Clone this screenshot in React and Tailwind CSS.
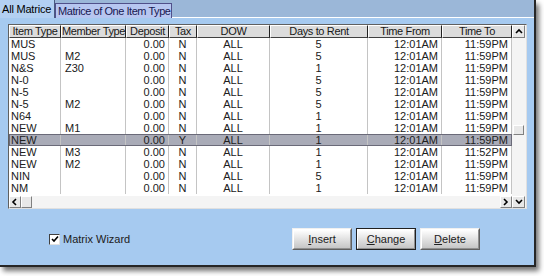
import React from "react";

const rows = [
  ["MUS", "", "0.00", "N", "ALL", "5", "12:01AM", "11:59PM"],
  ["MUS", "M2", "0.00", "N", "ALL", "5", "12:01AM", "11:59PM"],
  ["N&S", "Z30", "0.00", "N", "ALL", "1", "12:01AM", "11:59PM"],
  ["N-0", "", "0.00", "N", "ALL", "5", "12:01AM", "11:59PM"],
  ["N-5", "", "0.00", "N", "ALL", "5", "12:01AM", "11:59PM"],
  ["N-5", "M2", "0.00", "N", "ALL", "5", "12:01AM", "11:59PM"],
  ["N64", "", "0.00", "N", "ALL", "1", "12:01AM", "11:59PM"],
  ["NEW", "M1", "0.00", "N", "ALL", "1", "12:01AM", "11:59PM"],
  ["NEW", "", "0.00", "Y", "ALL", "1", "12:01AM", "11:59PM"],
  ["NEW", "M3", "0.00", "N", "ALL", "1", "12:01AM", "11:52PM"],
  ["NEW", "M2", "0.00", "N", "ALL", "1", "12:01AM", "11:59PM"],
  ["NIN", "", "0.00", "N", "ALL", "5", "12:01AM", "11:59PM"],
  ["NM", "", "0.00", "N", "ALL", "1", "12:01AM", "11:59PM"],
];

const cols = [
  { label: "Item Type", w: "w-[52px]", align: "justify-start pl-[2px]" },
  { label: "Member Type", w: "w-[65px]", align: "justify-start pl-[4px]" },
  { label: "Deposit", w: "w-[43px]", align: "justify-end pr-[3px]" },
  { label: "Tax", w: "w-[28px]", align: "justify-center" },
  { label: "DOW", w: "w-[73px]", align: "justify-center" },
  { label: "Days to Rent", w: "w-[98px]", align: "justify-center" },
  { label: "Time From", w: "w-[74px]", align: "justify-end pr-[3px]" },
  { label: "Time To", w: "w-[70px]", align: "justify-end pr-[3px]" },
];

function ScrollBtn({ children, className = "" }) {
  return (
    <div
      className={
        "flex items-center justify-center bg-[#e8e8e8] border border-t-white border-l-white border-r-[#808080] border-b-[#808080] " +
        className
      }
    >
      {children}
    </div>
  );
}

function Arrow({ dir }) {
  const d = {
    up: "M1 5 L4 2 L7 5",
    down: "M1 2 L4 5 L7 2",
    left: "M5 1 L2 4 L5 7",
    right: "M2 1 L5 4 L2 7",
  }[dir];
  return (
    <svg width="8" height="8" viewBox="0 0 8 8">
      <path d={d} fill="none" stroke="#000" strokeWidth="1.6" />
    </svg>
  );
}

function Button({ children, focused }) {
  return (
    <div
      className={
        "w-[60px] h-[22px] " +
        (focused ? "border border-[#202020]" : "border border-[#606060] border-t-[#f0f0f0] border-l-[#f0f0f0]")
      }
    >
      <div className="w-full h-full flex items-center justify-center bg-gradient-to-b from-[#ffffff] to-[#c6c6c6] border border-t-white border-l-white border-r-[#909090] border-b-[#909090] text-[11px] text-[#202020]">
        {children}
      </div>
    </div>
  );
}

export default function App() {
  return (
    <div
      className="w-[544px] h-[276px] bg-white overflow-hidden"
      style={{ fontFamily: '"Liberation Sans", Arial, sans-serif' }}
    >
      <div className="w-[536px] h-[267px] flex flex-col border-r-2 border-b-2 border-[#262626] shadow-[3px_4px_5px_rgba(0,0,0,0.55)]">
        {/* tab strip */}
        <div className="h-[18px] flex bg-[#9bb7d8]">
          <div className="w-[55px] h-[18px] bg-[#b3d0f2] flex items-center pl-[2px] text-[11px] text-black whitespace-nowrap tracking-[-0.2px] border-r border-[#4a5a80]">
            All Matrice
          </div>
          <div className="mt-[3px] w-[117px] h-[15px] bg-[#b7c6f0] border border-[#50508a] border-b-0 flex items-center pl-[2px] text-[11px] text-[#181850] whitespace-nowrap tracking-[-0.45px] overflow-hidden">
            Matrice of One Item Type
          </div>
          <div className="flex-1 flex flex-col justify-end">
            <div className="h-[1px] bg-white" />
          </div>
        </div>
        {/* panel */}
        <div className="flex-1 bg-[#a6caf0] flex flex-col pl-[8px] pt-[6px]">
          {/* grid */}
          <div className="w-[519px] h-[185px] bg-white border border-t-[#606060] border-l-[#606060] border-r-[#e0e0e0] border-b-[#e0e0e0] flex">
            <div className="w-[503px] flex flex-col">
              <div className="flex h-[13px]">
                {cols.map((c) => (
                  <div
                    key={c.label}
                    className={
                      c.w +
                      " h-[13px] bg-[#dcdcdc] border border-t-white border-l-white border-r-[#202020] border-b-[#404040] flex items-center justify-center text-[11px] tracking-[-0.35px] text-[#181818] leading-none overflow-hidden whitespace-nowrap"
                    }
                  >
                    {c.label}
                  </div>
                ))}
              </div>
              {rows.map((r, i) => {
                const sel = i === 8;
                return (
                  <div
                    key={i}
                    className={"flex h-[12px] " + (sel ? "bg-[#a9abb7] outline outline-1 outline-[#6a6a78] -outline-offset-1" : "")}
                  >
                    {r.map((v, j) => (
                      <div
                        key={j}
                        className={
                          cols[j].w +
                          " " +
                          cols[j].align +
                          " h-[12px] flex items-center text-[11px] leading-none text-[#202020] whitespace-nowrap overflow-hidden border-r border-[#c4c4c4]"
                        }
                      >
                        {v}
                      </div>
                    ))}
                  </div>
                );
              })}
              <div className="flex-1" />
              <div className="h-[12px] flex bg-[#f4f4f4]">
                <ScrollBtn className="w-[12px] h-[12px]">
                  <Arrow dir="left" />
                </ScrollBtn>
                <ScrollBtn className="w-[11px] h-[12px]" />
                <div className="flex-1" />
                <ScrollBtn className="w-[12px] h-[12px]">
                  <Arrow dir="right" />
                </ScrollBtn>
              </div>
            </div>
            <div className="w-[14px] flex flex-col bg-[#f4f4f4]">
              <ScrollBtn className="w-[13px] h-[13px]">
                <Arrow dir="up" />
              </ScrollBtn>
              <div className="flex-1 pt-[87px] pl-[1px]">
                <ScrollBtn className="w-[11px] h-[10px]" />
              </div>
              <ScrollBtn className="w-[13px] h-[12px]">
                <Arrow dir="down" />
              </ScrollBtn>
            </div>
          </div>
          {/* bottom row */}
          <div className="flex pt-[19px]">
            <div className="w-[284px] flex items-center pl-[41px] h-[22px]">
              <div className="w-[11px] h-[11px] bg-white border border-t-[#404040] border-l-[#404040] border-r-[#e0e0e0] border-b-[#e0e0e0] flex items-center justify-center">
                <svg width="8" height="8" viewBox="0 0 8 8">
                  <path d="M1 4 L3 6 L7 1.5" fill="none" stroke="#000" strokeWidth="1.6" />
                </svg>
              </div>
              <span className="ml-[3px] text-[11px] text-[#202020]">Matrix Wizard</span>
            </div>
            <div className="flex gap-[4px]">
              <Button>
                <span className="underline">I</span>nsert
              </Button>
              <Button focused>
                <span className="underline">C</span>hange
              </Button>
              <Button>
                <span className="underline">D</span>elete
              </Button>
            </div>
          </div>
        </div>
      </div>
    </div>
  );
}
